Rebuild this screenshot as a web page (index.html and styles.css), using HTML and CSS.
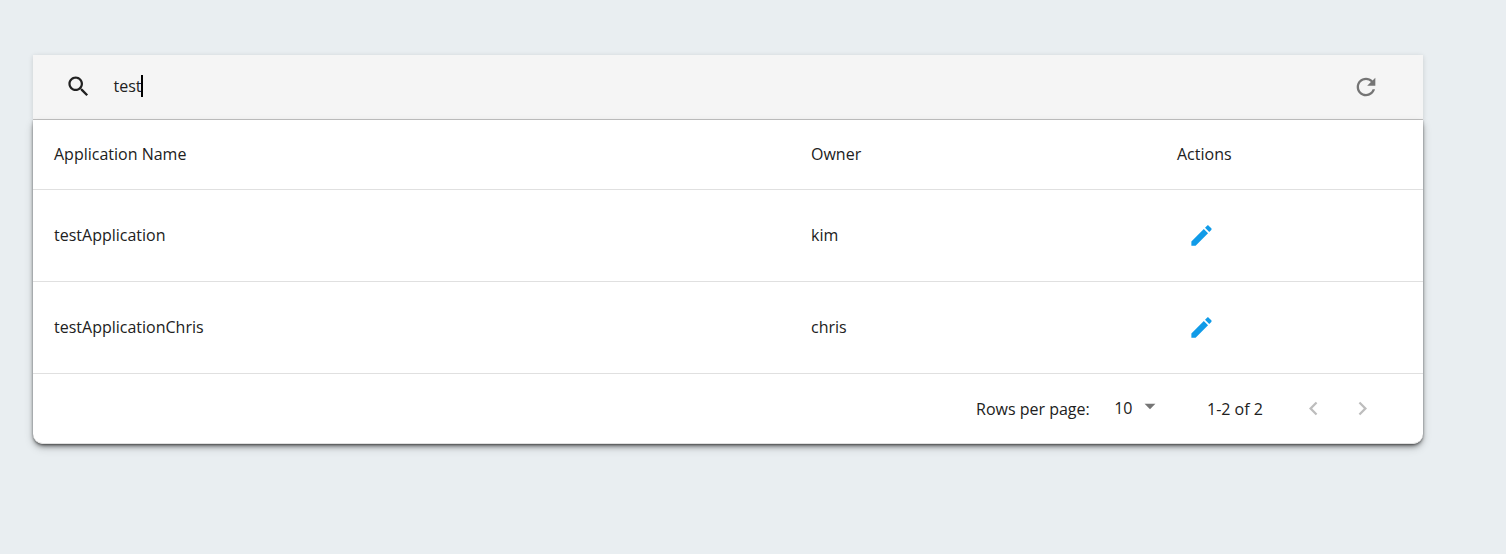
FILE: index.html
```html
<!DOCTYPE html>
<html lang="en">
<head>
<meta charset="utf-8">
<title>Applications</title>
<link rel="stylesheet" href="styles.css">
</head>
<body>
<main class="page">
  <header class="toolbar">
    <svg class="icon search" viewBox="0 0 24 24"><path d="M15.5 14h-.79l-.28-.27C15.41 12.59 16 11.11 16 9.5 16 5.91 13.09 3 9.5 3S3 5.91 3 9.5 5.91 16 9.5 16c1.61 0 3.09-.59 4.23-1.57l.27.28v.79l5 4.99L20.49 19l-4.99-5zm-6 0C7.01 14 5 11.99 5 9.5S7.01 5 9.5 5 14 7.01 14 9.5 11.99 14 9.5 14z"/></svg>
    <div class="query">test<span class="caret"></span></div>
    <svg class="icon refresh" viewBox="0 0 24 24"><path d="M17.65 6.35C16.2 4.9 14.21 4 12 4c-4.42 0-7.99 3.58-7.99 8s3.57 8 7.99 8c3.73 0 6.84-2.55 7.73-6h-2.08c-.82 2.33-3.04 4-5.65 4-3.31 0-6-2.69-6-6s2.69-6 6-6c1.66 0 3.14.69 4.22 1.78L13 11h7V4l-2.35 2.35z"/></svg>
  </header>
  <section class="card">
    <div class="row head"><span>Application Name</span><span>Owner</span><span>Actions</span></div>
    <div class="row"><span>testApplication</span><span>kim</span><svg class="icon edit" viewBox="0 0 24 24"><path d="M3 17.25V21h3.75L17.81 9.94l-3.75-3.75L3 17.25zM20.71 7.04c.39-.39.39-1.02 0-1.41l-2.34-2.34c-.39-.39-1.02-.39-1.41 0l-1.83 1.83 3.75 3.75 1.83-1.83z"/></svg></div>
    <div class="row"><span>testApplicationChris</span><span>chris</span><svg class="icon edit" viewBox="0 0 24 24"><path d="M3 17.25V21h3.75L17.81 9.94l-3.75-3.75L3 17.25zM20.71 7.04c.39-.39.39-1.02 0-1.41l-2.34-2.34c-.39-.39-1.02-.39-1.41 0l-1.83 1.83 3.75 3.75 1.83-1.83z"/></svg></div>
    <footer class="pager">
      <span class="label">Rows per page:</span>
      <span class="size">10</span>
      <svg class="icon drop" viewBox="0 0 24 24"><path d="M7 10l5 5 5-5z"/></svg>
      <span class="range">1-2 of 2</span>
      <svg class="icon prev" viewBox="0 0 24 24"><path d="M15.41 7.41L14 6l-6 6 6 6 1.41-1.41L10.83 12z"/></svg>
      <svg class="icon next" viewBox="0 0 24 24"><path d="M10 6L8.59 7.41 13.17 12l-4.58 4.59L10 18l6-6z"/></svg>
    </footer>
  </section>
</main>
</body>
</html>
```
FILE: styles.css
```css
* { box-sizing: border-box; }
html { background: #e9eef1; }
body {
  margin: 0;
  min-height: 100vh;
  padding: 55px 0 0 33px;
  color: #212121;
  font: 16px/24px "Open Sans", sans-serif;
}
.page { width: 1390px; }
.icon { width: 27px; height: 27px; flex: none; fill: currentColor; }
.toolbar {
  display: flex;
  align-items: center;
  height: 65px;
  padding: 0 43px 1px 31.5px;
  background: #f5f5f5;
  border-bottom: 1px solid #c6c6c6;
  box-shadow: 0 1px 5px rgba(0, 0, 0, .14);
}
.query { display: flex; align-items: center; margin: 0 0 2px 22px; }
.caret { width: 2px; height: 22px; background: #000; margin-left: -1px; }
.refresh { width: 28px; height: 28px; margin-left: auto; color: #757575; }
.card {
  position: relative;
  height: 324px;
  background: #fff;
  border-radius: 0 0 10px 10px;
  box-shadow: 0 3px 5px -1px rgba(0, 0, 0, .5), 0 1px 2px rgba(0, 0, 0, .36), 0 4px 10px rgba(0, 0, 0, .16);
}
.row {
  display: grid;
  grid-template-columns: 757px 366px 1fr;
  align-items: center;
  height: 92px;
  padding: 0 0 1px 21px;
  border-bottom: 1px solid #e0e0e0;
}
.head { height: 70px; }
.edit { margin: 1px 0 0 10.5px; color: #109be8; }
.pager {
  display: flex;
  align-items: center;
  height: 70px;
  padding-left: 943px;
  border-bottom: 1px solid #e0e0e0;
  border-radius: 0 0 10px 10px;
}
.label, .range { margin-top: 1px; }
.size { margin: 0 0 1px 24.5px; }
.drop { width: 26px; height: 26px; margin: 0 0 5px 4.5px; color: #757575; }
.range { margin-left: 44px; }
.prev { margin: 0 0 1px 37.5px; color: #bdbdbd; }
.next { margin: 0 0 1px 21.5px; color: #bdbdbd; }
```
